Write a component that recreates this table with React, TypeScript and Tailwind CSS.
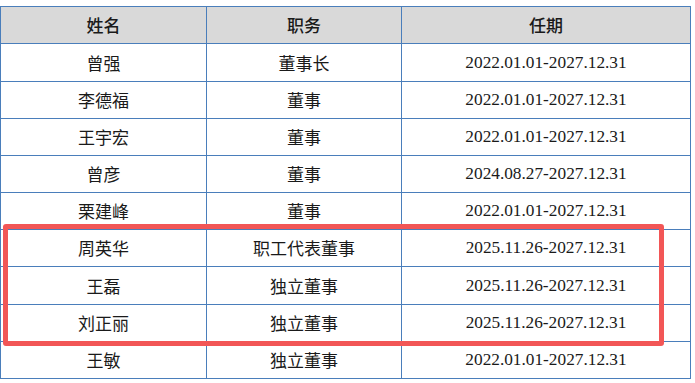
import React from 'react';

const rows = [
  { name: '曾强', role: '董事长', term: '2022.01.01-2027.12.31', h: 'h-[38px]' },
  { name: '李德福', role: '董事', term: '2022.01.01-2027.12.31', h: 'h-[37px]' },
  { name: '王宇宏', role: '董事', term: '2022.01.01-2027.12.31', h: 'h-[37px]' },
  { name: '曾彦', role: '董事', term: '2024.08.27-2027.12.31', h: 'h-[37px]' },
  { name: '栗建峰', role: '董事', term: '2022.01.01-2027.12.31', h: 'h-[37px]' },
  { name: '周英华', role: '职工代表董事', term: '2025.11.26-2027.12.31', h: 'h-[37px]' },
  { name: '王磊', role: '独立董事', term: '2025.11.26-2027.12.31', h: 'h-[38px]' },
  { name: '刘正丽', role: '独立董事', term: '2025.11.26-2027.12.31', h: 'h-[37px]' },
  { name: '王敏', role: '独立董事', term: '2022.01.01-2027.12.31', h: 'h-[37px]' },
];

const cjk = "font-['Noto_Sans_CJK_SC',sans-serif]";
const serif = "font-['Liberation_Serif','Noto_Sans_CJK_SC',serif]";

export default function App() {
  return (
    <div className="relative w-[695px] h-[383px] bg-white pt-[6px] overflow-hidden">
      <div className="w-[691px] border-l border-t border-[#4a7ebb] text-[#1a1a1a]">
        {/* Header */}
        <div className={`flex h-[37px] bg-[#d9d9d9] text-[17px] font-medium ${cjk}`}>
          <div className="w-[206px] border-r border-b border-[#4a7ebb] flex items-center justify-center">姓名</div>
          <div className="w-[195px] border-r border-b border-[#4a7ebb] flex items-center justify-center">职务</div>
          <div className="w-[289px] border-r border-b border-[#4a7ebb] flex items-center justify-center">任期</div>
        </div>
        {rows.map((r) => (
          <div key={r.name} className={`flex ${r.h} text-[17px]`}>
            <div className={`w-[206px] border-r border-b border-[#4a7ebb] flex items-center justify-center ${cjk}`}>{r.name}</div>
            <div className={`w-[195px] border-r border-b border-[#4a7ebb] flex items-center justify-center ${cjk}`}>{r.role}</div>
            <div className={`w-[289px] border-r border-b border-[#4a7ebb] flex items-center justify-center text-[17.3px] ${serif}`}>{r.term}</div>
          </div>
        ))}
      </div>

      {/* Highlight box */}
      <div className="absolute left-[3px] top-[224px] w-[661px] h-[122px] border-[5px] border-[#f25656] rounded-[3px]" />
    </div>
  );
}
